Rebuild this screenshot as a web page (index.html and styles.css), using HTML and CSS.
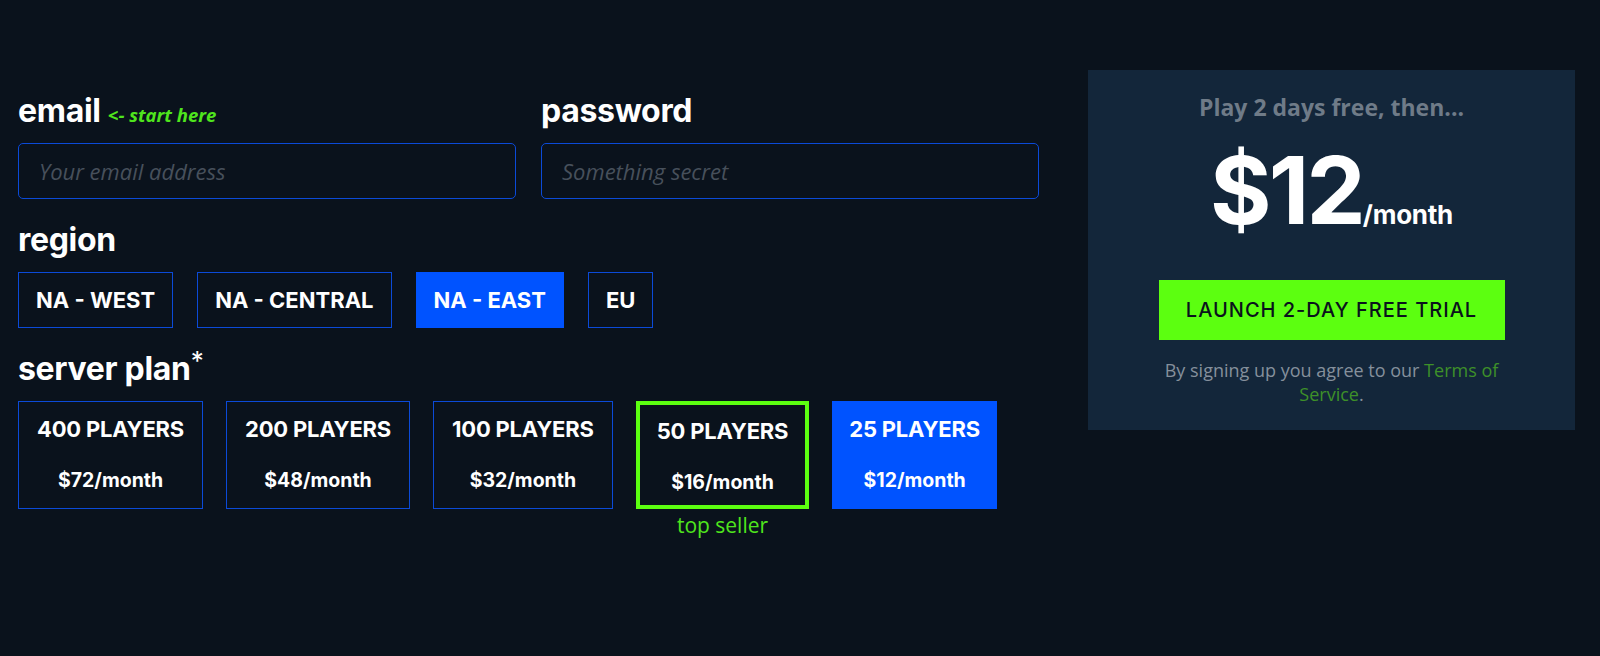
FILE: index.html
```html
<!DOCTYPE html>
<html lang="en">

<head>
    <meta charset="UTF-8">
    <meta name="viewport" content="width=device-width, initial-scale=1.0">
    <title>Start your server</title>
    <link rel="stylesheet" href="styles.css">
</head>

<body>
    <div class="page">
        <form class="signup-form">
            <div class="field-row">
                <div class="field">
                    <label class="field-label" for="email">email <span class="hint">&lt;- start here</span></label>
                    <input class="text-input" id="email" type="email" placeholder="Your email address">
                </div>
                <div class="field">
                    <label class="field-label" for="password">password</label>
                    <input class="text-input" id="password" type="password" placeholder="Something secret">
                </div>
            </div>

            <div class="section">
                <div class="field-label">region</div>
                <div class="option-row">
                    <button type="button" class="region-btn">NA - WEST</button>
                    <button type="button" class="region-btn">NA - CENTRAL</button>
                    <button type="button" class="region-btn active">NA - EAST</button>
                    <button type="button" class="region-btn">EU</button>
                </div>
            </div>

            <div class="section">
                <div class="field-label">server plan<span class="star">*</span></div>
                <div class="option-row plans">
                    <div class="plan">
                        <button type="button" class="plan-card">
                            <span class="plan-size">400 PLAYERS</span>
                            <span class="plan-price">$72/month</span>
                        </button>
                    </div>
                    <div class="plan">
                        <button type="button" class="plan-card">
                            <span class="plan-size">200 PLAYERS</span>
                            <span class="plan-price">$48/month</span>
                        </button>
                    </div>
                    <div class="plan">
                        <button type="button" class="plan-card">
                            <span class="plan-size">100 PLAYERS</span>
                            <span class="plan-price">$32/month</span>
                        </button>
                    </div>
                    <div class="plan">
                        <button type="button" class="plan-card featured">
                            <span class="plan-size">50 PLAYERS</span>
                            <span class="plan-price">$16/month</span>
                        </button>
                        <div class="plan-tag">top seller</div>
                    </div>
                    <div class="plan">
                        <button type="button" class="plan-card active">
                            <span class="plan-size">25 PLAYERS</span>
                            <span class="plan-price">$12/month</span>
                        </button>
                    </div>
                </div>
            </div>
        </form>

        <aside class="summary">
            <div class="summary-lead">Play 2 days free, then...</div>
            <div class="summary-price">$12<span class="per">/month</span></div>
            <button type="button" class="launch-btn">LAUNCH 2-DAY FREE TRIAL</button>
            <p class="terms">By signing up you agree to our <a href="#">Terms of Service</a>.</p>
        </aside>
    </div>
</body>

</html>
```

FILE: styles.css
```css
body {
    margin: 0;
    background: #0a121c;
    color: #fff;
    font-family: 'Inter', 'Liberation Sans', sans-serif;
}

.page {
    display: flex;
    align-items: flex-start;
    gap: 49px;
    padding: 70px 0 0 18px;
}

.signup-form {
    width: 1021px;
    margin: 0;
}

.field-row {
    display: grid;
    grid-template-columns: 1fr 1fr;
    gap: 25px;
    padding-top: 22px;
}

.field {
    display: flex;
    flex-direction: column;
}

.field-label {
    display: block;
    font-size: 32px;
    font-weight: 700;
    line-height: 38px;
    letter-spacing: -0.01em;
    margin-bottom: 13px;
}

.hint {
    font-family: 'Open Sans', sans-serif;
    font-style: italic;
    font-size: 18.5px;
    font-weight: 700;
    line-height: 1;
    color: #4fe51d;
    letter-spacing: 0;
}

.star {
    font-size: 26px;
    font-weight: 400;
    line-height: 0;
    vertical-align: 10px;
}

.text-input {
    box-sizing: border-box;
    height: 56px;
    padding: 0 20px;
    background: transparent;
    border: 1px solid #0b4ad8;
    border-radius: 5px;
    color: #fff;
    font-family: 'Open Sans', sans-serif;
    font-size: 22px;
    outline: none;
}

.text-input::placeholder {
    color: #47505b;
    font-style: italic;
}

.section {
    margin-top: 22px;
}

.option-row {
    display: flex;
    align-items: flex-start;
    gap: 24px;
}

.option-row.plans {
    gap: 23px;
}

.region-btn {
    box-sizing: border-box;
    height: 56px;
    padding: 0 17px;
    background: transparent;
    border: 1px solid #0b4ad8;
    color: #fff;
    font-family: 'Inter', sans-serif;
    font-size: 22px;
    font-weight: 700;
    letter-spacing: 0;
    cursor: pointer;
}

.region-btn.active,
.plan-card.active {
    background: #0053ff;
    border-color: #0053ff;
}

.plan {
    display: flex;
    flex-direction: column;
    align-items: center;
}

.plan-card {
    box-sizing: border-box;
    height: 108px;
    display: flex;
    flex-direction: column;
    align-items: center;
    justify-content: space-between;
    padding: 14px 18px 16px;
    background: transparent;
    border: 1px solid #0b4ad8;
    color: #fff;
    font-family: 'Inter', sans-serif;
    font-weight: 700;
    cursor: pointer;
}

.plan-size {
    font-size: 22px;
    letter-spacing: -0.01em;
}

.plan-price {
    font-size: 19.5px;
}

.plan-card.featured {
    border: 4px solid #5cff10;
    padding: 13px 17px 11px;
}

.plan-card.active {
    padding: 14px 16px 16px;
}

.plan-tag {
    margin-top: 2px;
    font-family: 'Open Sans', sans-serif;
    font-size: 21px;
    color: #4fe51d;
}

.summary {
    box-sizing: border-box;
    width: 487px;
    padding: 22px 24px 24px;
    background: #13263a;
    text-align: center;
}

.summary-lead {
    font-family: 'Open Sans', sans-serif;
    font-size: 23px;
    font-weight: 700;
    color: #6f7b88;
    line-height: 31px;
}

.summary-price {
    margin-top: 20px;
    font-size: 94px;
    font-weight: 700;
    line-height: 94px;
    letter-spacing: -0.03em;
}

.per {
    font-size: 26px;
    line-height: 1;
    letter-spacing: -0.01em;
}

.launch-btn {
    margin-top: 43px;
    width: 346px;
    height: 60px;
    background: #5cff10;
    border: none;
    color: #0a121c;
    font-family: 'Inter', sans-serif;
    font-size: 20px;
    font-weight: 500;
    letter-spacing: 1px;
    cursor: pointer;
}

.terms {
    margin: 18px auto 0;
    width: 350px;
    font-family: 'Open Sans', sans-serif;
    font-size: 18px;
    line-height: 24px;
    color: #85909c;
}

.terms a {
    color: #3e9029;
    text-decoration: none;
}
```
